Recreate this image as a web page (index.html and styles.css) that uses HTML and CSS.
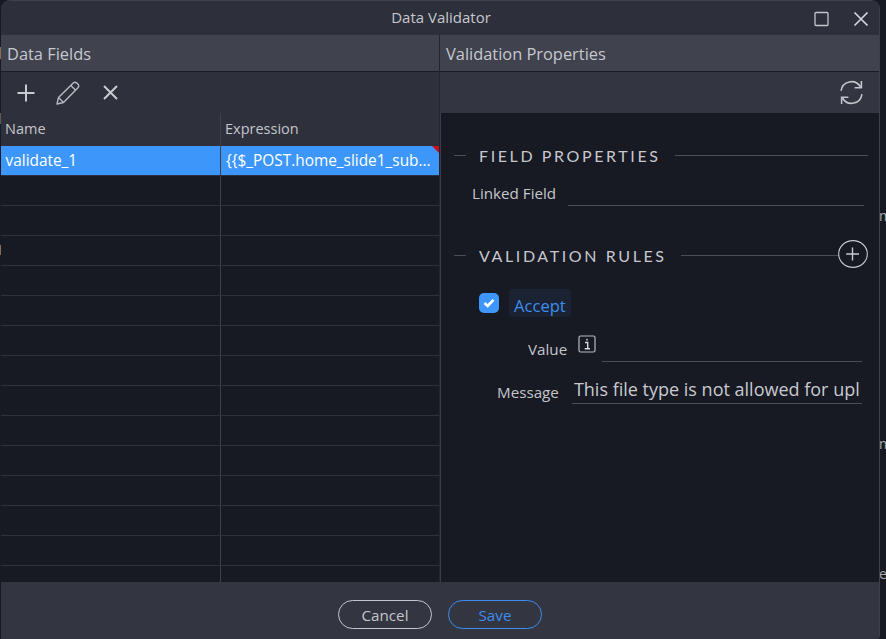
FILE: index.html
```html
<!DOCTYPE html>
<html lang="en">
<head>
<meta charset="utf-8">
<title>Data Validator</title>
<link rel="stylesheet" href="styles.css">
</head>
<body>
<div class="backdrop" aria-hidden="true">
  <span class="tick tick-a"></span>
  <span class="tick tick-b"></span>
  <span class="tick tick-c"></span>
  <span class="peek peek-a">m</span>
  <span class="peek peek-b">m</span>
  <span class="peek peek-c">e</span>
</div>
<div class="window">
  <header class="titlebar">
    <div class="title">Data Validator</div>
    <svg class="win-icon max" viewBox="0 0 16 16"><rect x="1" y="1.5" width="13" height="13" rx="1" fill="none" stroke="#c4c6cc" stroke-width="1.3"/></svg>
    <svg class="win-icon close" viewBox="0 0 16 16"><path d="M1.5 1.5 L14.5 14.5 M14.5 1.5 L1.5 14.5" fill="none" stroke="#d4d5da" stroke-width="1.7"/></svg>
  </header>
  <main class="panels">
    <section class="panel left">
      <h2 class="panel-head">Data Fields</h2>
      <div class="toolbar">
        <svg class="tool plus" viewBox="0 0 18 18"><path d="M9 0.5 V17.5 M0.5 9 H17.5" fill="none" stroke="#c9cacf" stroke-width="2"/></svg>
        <svg class="tool pencil" viewBox="0 0 24 24"><path d="M1 23 L2.5 16.5 L17.5 1.8 Q19 0.8 20.5 1.8 L22.3 3.6 Q23.2 5 22.2 6.4 L7.5 21.5 Z M14.8 4.5 L19.6 9.3 M2.5 16.5 L7.5 21.5" fill="none" stroke="#b9bac0" stroke-width="1.4" stroke-linejoin="round"/></svg>
        <svg class="tool cross" viewBox="0 0 15 15"><path d="M1 1 L14 14 M14 1 L1 14" fill="none" stroke="#c9cacf" stroke-width="2"/></svg>
      </div>
      <div class="table">
        <div class="row head"><div class="cell name">Name</div><div class="cell expr">Expression</div></div>
        <div class="row selected"><div class="cell name">validate_1</div><div class="cell expr">{{$_POST.home_slide1_sub...<span class="flag"></span></div></div>
        <div class="row"><div class="cell name"></div><div class="cell expr"></div></div>
        <div class="row"><div class="cell name"></div><div class="cell expr"></div></div>
        <div class="row"><div class="cell name"></div><div class="cell expr"></div></div>
        <div class="row"><div class="cell name"></div><div class="cell expr"></div></div>
        <div class="row"><div class="cell name"></div><div class="cell expr"></div></div>
        <div class="row"><div class="cell name"></div><div class="cell expr"></div></div>
        <div class="row"><div class="cell name"></div><div class="cell expr"></div></div>
        <div class="row"><div class="cell name"></div><div class="cell expr"></div></div>
        <div class="row"><div class="cell name"></div><div class="cell expr"></div></div>
        <div class="row"><div class="cell name"></div><div class="cell expr"></div></div>
        <div class="row"><div class="cell name"></div><div class="cell expr"></div></div>
        <div class="row"><div class="cell name"></div><div class="cell expr"></div></div>
        <div class="row"><div class="cell name"></div><div class="cell expr"></div></div>
        <div class="row last"><div class="cell name"></div><div class="cell expr"></div></div>
      </div>
    </section>
    <section class="panel right">
      <h2 class="panel-head">Validation Properties</h2>
      <div class="toolbar toolbar-end">
        <svg class="tool refresh" viewBox="0 0 24 24"><path d="M2 10.5 A10 10 0 0 1 20.5 6.5 M22 13.5 A10 10 0 0 1 3.5 17.5 M21.5 1 V7.5 H15 M2.5 23 V16.5 H9" fill="none" stroke="#c4c5cb" stroke-width="1.5"/></svg>
      </div>
      <div class="props">
        <div class="section-title first"><span class="dash"></span><span class="section-text">FIELD PROPERTIES</span><span class="rule"></span></div>
        <div class="field linked"><label class="field-label">Linked Field</label><div class="field-input"></div></div>
        <div class="section-title second"><span class="dash"></span><span class="section-text">VALIDATION RULES</span><span class="rule"></span>
          <svg class="add" viewBox="0 0 30 28"><ellipse cx="15" cy="14" rx="14.3" ry="13.4" fill="#171923" stroke="#c9cacf" stroke-width="1.1"/><path d="M14.5 7.5 V20.5 M8.2 14 H21" stroke="#c9cacf" stroke-width="1.4" fill="none"/></svg>
        </div>
        <div class="rule-row">
          <span class="checkbox"><svg viewBox="0 0 20 20"><path d="M5.5 10 L8.7 13 L14.5 6.8" fill="none" stroke="#fff" stroke-width="2.6"/></svg></span>
          <span class="rule-name">Accept</span>
        </div>
        <div class="field value"><label class="field-label">Value</label>
          <svg class="info" viewBox="0 0 18 18"><rect x="1" y="1" width="16" height="16" rx="1.5" fill="none" stroke="#b9bac0" stroke-width="1.2"/><path d="M7 7.5 H9.7 V13.5 M6.7 13.7 H12 M9 3.8 V5.6" fill="none" stroke="#d8d9dd" stroke-width="1.4"/></svg>
          <div class="field-input"></div></div>
        <div class="field message"><label class="field-label">Message</label><div class="field-input text"><span class="clip">This file type is not allowed for upload</span></div></div>
      </div>
    </section>
  </main>
  <footer class="footer">
    <button class="btn cancel" type="button">Cancel</button>
    <button class="btn save" type="button">Save</button>
  </footer>
</div>
</body>
</html>
```
FILE: styles.css
```css
* { box-sizing: border-box; }
html, body { margin: 0; height: 100%; }
body {
  width: 886px; height: 639px; overflow: hidden; position: relative;
  background: #171923;
  font-family: "Open Sans", "Noto Sans", sans-serif;
  color: #c8cad0;
}
.backdrop { position: absolute; inset: 0; }
.peek { position: absolute; left: 879px; font-size: 14px; line-height: 16px; color: #a8a9ad; }
.peek-a { top: 208px; }
.peek-b { top: 436px; }
.peek-c { top: 566px; }
.tick { position: absolute; left: 0; width: 1px; background: #8a6c50; }
.tick-a { top: 47px; height: 12px; }
.tick-b { top: 113px; height: 11px; background: #5f5a55; }
.tick-c { top: 245px; height: 10px; }

.window {
  position: relative; width: 879px; height: 639px; margin-left: 1px;
  display: flex; flex-direction: column;
  background: #2e303b;
  border-top: 1px solid #3d3f4a; border-right: 1px solid #3d3f4a;
  border-radius: 9px 9px 4px 0;
  overflow: hidden;
}
.titlebar {
  height: 34px; flex: none; position: relative;
  display: flex; align-items: center; justify-content: flex-end;
  background: #2d2f3a;
}
.title { position: absolute; left: 2px; right: 0; top: 0; text-align: center; font-size: 15px; line-height: 32px; color: #c6c8ce; }
.win-icon { position: absolute; }
.max { left: 813px; top: 10px; width: 16px; height: 16px; }
.close { left: 852px; top: 10px; width: 16px; height: 16px; }

.panels { flex: 1; min-height: 0; display: grid; grid-template-columns: 439px 1fr; }
.panel { display: flex; flex-direction: column; min-width: 0; }
.panel.left { border-right: 1px solid #24252e; }
.panel-head {
  margin: 0; height: 37px; flex: none; padding: 0 6px;
  background: #40424e; border-bottom: 1px solid #1a1b23;
  font-size: 16.4px; font-weight: 400; line-height: 38px; color: #c6c8ce;
}
.toolbar { height: 41px; flex: none; background: #2e303b; display: flex; align-items: center; position: relative; }
.right .toolbar { background: #333540; }
.toolbar-end { justify-content: flex-end; padding-right: 15px; }
.tool { display: block; flex: none; }
.plus { width: 18px; height: 18px; margin-left: 16px; }
.pencil { width: 24px; height: 24px; margin-left: 21px; }
.cross { width: 15px; height: 15px; margin-left: 23px; }
.refresh { width: 25px; height: 25px; }

.table { flex: 1; background: #171923; display: flex; flex-direction: column; }
.row { display: grid; grid-template-columns: 220px 1fr; height: 30px; flex: none; border-bottom: 1px solid #2e303b; font-size: 14.5px; line-height: 29px; }
.row.head { height: 33px; background: #2e303b; color: #c4c6cc; border-bottom: 0; line-height: 32px; }
.row.selected { background: #3d97fb; color: #fff; height: 30px; border-bottom: 1px solid #2e303b; font-size: 15.4px; }
.row.last { height: 16px; border-bottom: 0; }
.cell { padding-left: 4px; position: relative; white-space: nowrap; overflow: hidden; }
.cell.name { border-right: 1px solid #3f414c; }
.selected .expr { padding-left: 5px; }
.selected .name { padding-left: 4.5px; }
.flag { position: absolute; right: 0; top: 0; width: 0; height: 0; border-top: 7px solid #c8101c; border-left: 7px solid transparent; }

.props { flex: 1; background: #171923; border-left: 1px solid #3a3c47; position: relative; }
.section-title { display: flex; align-items: center; margin: 0 11px 0 13px; letter-spacing: 2.6px; font-family: Lato, "Open Sans", sans-serif; font-size: 16px; line-height: 24px; color: #c6c8ce; position: relative; }
.section-title.first { padding-top: 29px; }
.section-title.second { margin-top: 34px; }
.dash { width: 12px; height: 1px; background: #4a4c57; flex: none; }
.section-text { margin-left: 13px; margin-right: 14px; white-space: nowrap; padding-top: 2px; }
.rule { flex: 1; height: 1px; background: #4a4c57; }
.add { width: 30px; height: 28px; flex: none; margin: -4px 0 -2px -1px; }
.field { display: flex; font-size: 15.2px; color: #c4c6cc; }
.field-label { white-space: nowrap; }
.field-input { flex: 1; border-bottom: 1px solid #4a4c57; min-width: 0; }
.linked { margin: 14px 15px 0 31px; height: 26px; align-items: flex-start; line-height: 20px; }
.linked .field-label { margin-top: 1px; margin-right: 12px; }
.linked .field-input { height: 24px; }
.rule-row { display: flex; align-items: center; margin: 21px 0 0 38px; }
.checkbox { width: 20px; height: 20px; border-radius: 5px; background: #3d97fb; display: block; flex: none; }
.checkbox svg { display: block; width: 20px; height: 20px; }
.rule-name { margin-left: 10px; height: 28px; padding: 0 5px; border-radius: 4px; background: #1b2232; color: #3b8df0; font-size: 16.6px; line-height: 33px; }
.value { margin: 18px 17px 0 87px; height: 30px; line-height: 20px; }
.value .field-label { margin-top: 4px; }
.info { width: 18px; height: 18px; margin-left: 11px; margin-top: 0; flex: none; }
.value .field-input { margin-left: 6px; height: 27px; }
.message { margin: 12px 17px 0 56px; height: 30px; }
.message .field-label { margin-top: 5px; line-height: 20px; margin-right: 13px; }
.message .text { height: 27px; font-size: 18px; line-height: 24px; color: #c8cad0; padding: 0 3px 0 2px; overflow: hidden; }
.clip { display: block; overflow: hidden; white-space: nowrap; }

.footer { height: 57px; flex: none; background: #333540; display: flex; justify-content: center; align-items: flex-start; gap: 16px; padding-top: 18px; }
.btn { width: 94px; height: 29px; border-radius: 15px; background: transparent; font: 15.2px "Open Sans", sans-serif; padding: 0; }
.cancel { border: 1px solid #c4c6cc; color: #c4c6cc; }
.save { border: 1px solid #3b8df0; color: #3b8df0; }
```
